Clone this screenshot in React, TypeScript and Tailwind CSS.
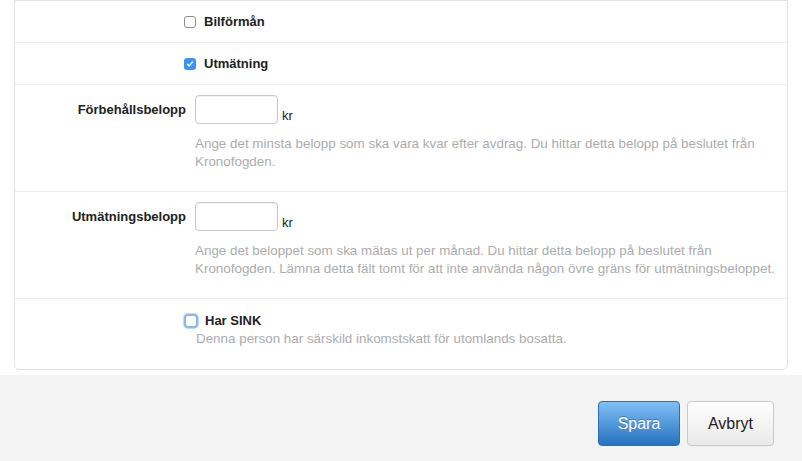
import React from 'react';

const font = { fontFamily: '"Liberation Sans", Arial, sans-serif' };

const Checkbox: React.FC<{ checked?: boolean; focused?: boolean }> = ({ checked, focused }) => {
    if (checked) {
        return (
            <span className="flex items-center justify-center w-[12px] h-[12px] rounded-[3px] bg-[#3b93f2]">
                <svg width="8" height="8" viewBox="0 0 8 8" fill="none">
                    <path d="M1.5 4.2 L3.2 5.9 L6.5 2" stroke="white" strokeWidth="1.4" strokeLinecap="round" strokeLinejoin="round" />
                </svg>
            </span>
        );
    }
    if (focused) {
        return (
            <span className="block w-[14px] h-[14px] rounded-[4px] border-[2px] border-[#8ab8ee] bg-white shadow-[0_0_0_1px_#c3dbf7]" />
        );
    }
    return <span className="block w-[12px] h-[12px] rounded-[3px] border border-[#8c8c8c] bg-white" />;
};

const AmountRow: React.FC<{ label: string; help: string[] }> = ({ label, help }) => (
    <div className="flex h-[107px] border-b border-[#ececec] pt-[10px]">
        <div className="w-[171px] shrink-0 text-right font-bold text-[13px] text-[#222] pt-[6px] leading-[18px]">{label}</div>
        <div className="ml-[9px] flex flex-col">
            <div className="flex items-end">
                <div className="w-[83px] h-[29px] rounded-[4px] border border-[#c8c8c8] bg-white shadow-[inset_0_1px_1px_rgba(0,0,0,0.05)]" />
                <span className="ml-[4px] text-[13px] text-[#222] leading-[16px]">kr</span>
            </div>
            <div className="mt-[11px] text-[13.4px] leading-[17.5px] text-[#acacac]">
                {help.map((l, i) => (
                    <div key={i}>{l}</div>
                ))}
            </div>
        </div>
    </div>
);

const App: React.FC = () => {
    return (
        <div className="w-[802px] h-[461px] bg-white flex flex-col overflow-hidden" style={font}>
            <div className="mx-[14px] w-[774px] h-[370px] border border-[#e3e3e3] rounded-b-[5px] bg-white">
                {/* Bilförmån */}
                <div className="flex items-center h-[42px] border-b border-[#ececec] pl-[169px]">
                    <Checkbox />
                    <span className="ml-[8px] font-bold text-[13px] text-[#222]">Bilförmån</span>
                </div>

                {/* Utmätning */}
                <div className="flex items-center h-[42px] border-b border-[#ececec] pl-[169px]">
                    <Checkbox checked />
                    <span className="ml-[8px] font-bold text-[13px] text-[#222]">Utmätning</span>
                </div>

                <AmountRow
                    label="Förbehållsbelopp"
                    help={[
                        'Ange det minsta belopp som ska vara kvar efter avdrag. Du hittar detta belopp på beslutet från',
                        'Kronofogden.',
                    ]}
                />

                <AmountRow
                    label="Utmätningsbelopp"
                    help={[
                        'Ange det beloppet som ska mätas ut per månad. Du hittar detta belopp på beslutet från',
                        'Kronofogden. Lämna detta fält tomt för att inte använda någon övre gräns för utmätningsbeloppet.',
                    ]}
                />

                {/* Har SINK */}
                <div className="pl-[169px] pt-[12px]">
                    <div className="flex items-center">
                        <Checkbox focused />
                        <span className="ml-[7px] font-bold text-[13px] text-[#222]">Har SINK</span>
                    </div>
                    <div className="ml-[12px] text-[13.4px] leading-[16px] text-[#acacac]">
                        Denna person har särskild inkomstskatt för utomlands bosatta.
                    </div>
                </div>
            </div>

            <div className="mt-[5px] flex-1 bg-[#f3f3f3] flex justify-end items-start pt-[26px] pr-[28px] gap-[7px]">
                <button className="w-[82px] h-[45px] rounded-[4px] border border-[#2a6fb5] bg-gradient-to-b from-[#80c0f6] to-[#2472be] text-white text-[16px] [text-shadow:0_-1px_0_rgba(0,0,0,0.3)]">
                    Spara
                </button>
                <button className="w-[87px] h-[45px] rounded-[4px] border border-[#c9c9c9] bg-gradient-to-b from-white to-[#e9e9e9] text-[#222] text-[16px]">
                    Avbryt
                </button>
            </div>
        </div>
    );
};

export default App;
